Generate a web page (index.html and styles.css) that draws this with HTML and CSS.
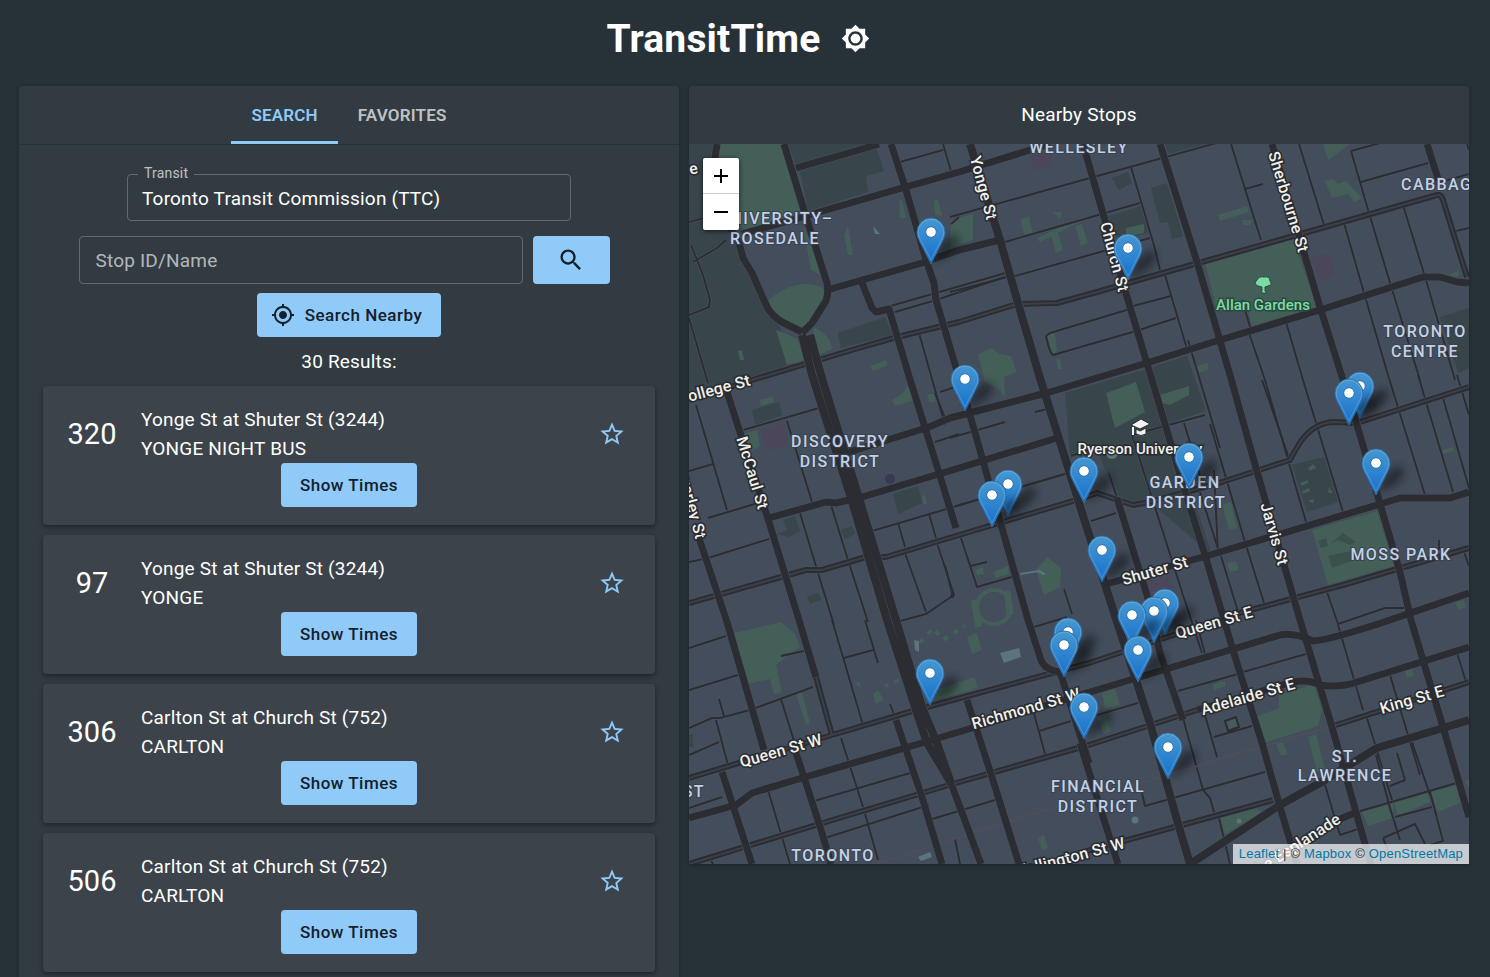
FILE: index.html
```html
<!DOCTYPE html>
<html lang="en">
<head>
<meta charset="utf-8">
<meta name="viewport" content="width=device-width, initial-scale=1">
<title>TransitTime</title>
<link rel="stylesheet" href="styles.css">
</head>
<body>
<div class="app">
  <header class="app-header">
    <h1 class="app-title">TransitTime</h1>
    <button class="icon-button" type="button" aria-label="Toggle light theme">
      <svg class="icon" viewBox="0 0 24 24" aria-hidden="true"><path d="M20 8.69V4h-4.69L12 .69 8.69 4H4v4.69L.69 12 4 15.31V20h4.69L12 23.31 15.31 20H20v-4.69L23.31 12 20 8.69zM12 18c-3.31 0-6-2.69-6-6s2.69-6 6-6 6 2.69 6 6-2.69 6-6 6zm0-10c-2.21 0-4 1.79-4 4s1.79 4 4 4 4-1.79 4-4-1.79-4-4-4z"/></svg>
    </button>
  </header>
  <main class="panels">
    <section class="panel panel-search">
      <div class="tabs" role="tablist">
        <button class="tab tab-active" type="button" role="tab" aria-selected="true">SEARCH</button>
        <button class="tab" type="button" role="tab" aria-selected="false">FAVORITES</button>
      </div>
      <div class="search-body">
        <fieldset class="select-field">
          <legend class="select-legend"><label for="transit">Transit</label></legend>
          <select class="select-input" id="transit"><option>Toronto Transit Commission (TTC)</option></select>
        </fieldset>
        <form class="search-row">
          <input class="text-input" type="text" placeholder="Stop ID/Name" aria-label="Stop ID/Name">
          <button class="button button-search" type="button" aria-label="Search">
            <svg class="icon-small" viewBox="0 0 24 24" aria-hidden="true"><path d="M15.5 14h-.79l-.28-.27C15.41 12.59 16 11.11 16 9.5 16 5.91 13.09 3 9.5 3S3 5.91 3 9.5 5.91 16 9.5 16c1.61 0 3.09-.59 4.23-1.57l.27.28v.79l5 4.99L20.49 19l-4.99-5zm-6 0C7.01 14 5 11.99 5 9.5S7.01 5 9.5 5 14 7.01 14 9.5 11.99 14 9.5 14z"/></svg>
          </button>
        </form>
        <button class="button button-nearby" type="button">
          <svg class="icon-tiny" viewBox="0 0 24 24" aria-hidden="true"><path d="M12 8c-2.21 0-4 1.79-4 4s1.79 4 4 4 4-1.79 4-4-1.79-4-4-4zm8.94 3c-.46-4.17-3.77-7.48-7.94-7.94V1h-2v2.06C6.83 3.52 3.52 6.83 3.06 11H1v2h2.06c.46 4.17 3.77 7.48 7.94 7.94V23h2v-2.06c4.17-.46 7.48-3.77 7.94-7.94H23v-2h-2.06zM12 19c-3.87 0-7-3.13-7-7s3.13-7 7-7 7 3.13 7 7-3.13 7-7 7z"/></svg>
          Search Nearby
        </button>
        <p class="result-count">30 Results:</p>
        <ul class="results">
          <li class="card">
            <div class="card-row"><span class="route">320</span><div class="stop"><p>Yonge St at Shuter St (3244)</p><p>YONGE NIGHT BUS</p></div>
              <button class="star" type="button" aria-label="Add to favorites"><svg class="icon-small" viewBox="0 0 24 24" aria-hidden="true"><path d="M22 9.24l-7.19-.62L12 2 9.19 8.63 2 9.24l5.46 4.73L5.82 21 12 17.27 18.18 21l-1.63-7.03L22 9.24zM12 15.4l-3.76 2.27 1-4.28-3.32-2.88 4.38-.38L12 6.1l1.71 4.04 4.38.38-3.32 2.88 1 4.28L12 15.4z"/></svg></button></div>
            <button class="button" type="button">Show Times</button>
          </li>
          <li class="card">
            <div class="card-row"><span class="route">97</span><div class="stop"><p>Yonge St at Shuter St (3244)</p><p>YONGE</p></div>
              <button class="star" type="button" aria-label="Add to favorites"><svg class="icon-small" viewBox="0 0 24 24" aria-hidden="true"><path d="M22 9.24l-7.19-.62L12 2 9.19 8.63 2 9.24l5.46 4.73L5.82 21 12 17.27 18.18 21l-1.63-7.03L22 9.24zM12 15.4l-3.76 2.27 1-4.28-3.32-2.88 4.38-.38L12 6.1l1.71 4.04 4.38.38-3.32 2.88 1 4.28L12 15.4z"/></svg></button></div>
            <button class="button" type="button">Show Times</button>
          </li>
          <li class="card">
            <div class="card-row"><span class="route">306</span><div class="stop"><p>Carlton St at Church St (752)</p><p>CARLTON</p></div>
              <button class="star" type="button" aria-label="Add to favorites"><svg class="icon-small" viewBox="0 0 24 24" aria-hidden="true"><path d="M22 9.24l-7.19-.62L12 2 9.19 8.63 2 9.24l5.46 4.73L5.82 21 12 17.27 18.18 21l-1.63-7.03L22 9.24zM12 15.4l-3.76 2.27 1-4.28-3.32-2.88 4.38-.38L12 6.1l1.71 4.04 4.38.38-3.32 2.88 1 4.28L12 15.4z"/></svg></button></div>
            <button class="button" type="button">Show Times</button>
          </li>
          <li class="card">
            <div class="card-row"><span class="route">506</span><div class="stop"><p>Carlton St at Church St (752)</p><p>CARLTON</p></div>
              <button class="star" type="button" aria-label="Add to favorites"><svg class="icon-small" viewBox="0 0 24 24" aria-hidden="true"><path d="M22 9.24l-7.19-.62L12 2 9.19 8.63 2 9.24l5.46 4.73L5.82 21 12 17.27 18.18 21l-1.63-7.03L22 9.24zM12 15.4l-3.76 2.27 1-4.28-3.32-2.88 4.38-.38L12 6.1l1.71 4.04 4.38.38-3.32 2.88 1 4.28L12 15.4z"/></svg></button></div>
            <button class="button" type="button">Show Times</button>
          </li>
        </ul>
      </div>
    </section>
    <section class="panel panel-map">
      <h2 class="map-heading">Nearby Stops</h2>
      <div class="map">
        <svg class="map-canvas" viewBox="689 144 780 720" preserveAspectRatio="xMidYMid slice" role="img" aria-label="Map of nearby stops">
          <defs>
            <linearGradient id="pin-fill" x1="0" y1="0" x2="0" y2="1"><stop offset="0" stop-color="#4698d2"/><stop offset="1" stop-color="#1670cb"/></linearGradient>
            <filter id="soft" x="-50%" y="-50%" width="200%" height="200%"><feGaussianBlur stdDeviation="4"/></filter>
            <g id="pin">
              <path d="M1 31L5 19Q15 2 25 3Q33 9 20 21Z" fill="#000" opacity=".42" filter="url(#soft)"/>
              <path d="M0 32L-11.5 9C-13.5 5-14 3-14 .5A14 14.500 0 0 1 14 .5C14 3 13.500 5 11.500 9Z" fill="url(#pin-fill)" stroke="#2e6c9f" stroke-width="1"/>
              <path d="M0 28L-10.500 8C-12.500 4.500-12.800 3-12.800 .5A12.800 13.300 0 0 1 12.800 .5C12.800 3 12.500 4.500 10.500 8Z" fill="none" stroke="#fff" stroke-opacity=".16" stroke-width="1.200"/>
              <circle r="5.300" fill="#fff" stroke="#2b73ad" stroke-width="1"/>
            </g>
            <g id="major">
              <path d="M717 144L713 170L723 215L739 243L743 258L752 273L767 307Q772 316 782 322L802 332M784 144L804 210L827 283Q829 292 826 301L812 323L802 333"/>
              <path d="M796 168L859 150L879 144M742 234L802 217L902 188L959 172L1030 150L1050 144M827 290L922 263L959 250L1000 240"/>
              <path d="M891 144L906 190L926 260L934 283L936 300L970 415L1002 528L1028 620L1041 660Q1045 670 1059 672L1061 675L1089 763"/>
              <path d="M862 283L872 308L876 312L889 309L909 376L931 447L956 528"/>
              <path d="M849 452L929 427L950 418L1050 392L1150 362L1210 343L1320 310L1423 277L1440 277L1457 282L1469 283"/>
              <path d="M769 518L826 502L836 503L862 497L959 468L1057 438"/>
              <path d="M1103 585L1210 555L1377 505L1400 498L1450 498L1469 492"/>
              <path d="M689 818L736 805L752 793L802 778L922 743L972 728L1080 695L1173 667L1280 635Q1293 632 1313 641Q1330 640 1390 620L1469 593"/>
              <path d="M1197 710L1293 682Q1309 679 1320 685Q1340 688 1357 682L1469 647"/>
              <path d="M1083 144L1127 297L1152 380L1183 485L1205 555L1232 647L1262 743L1280 807L1297 864"/>
              <path d="M1160 144L1197 262L1230 375L1258 475L1300 620L1332 727L1363 837L1371 864"/>
              <path d="M1272 144L1320 307L1343 380L1357 425L1400 572L1411 620L1443 727L1469 817"/>
              <path d="M1427 144L1440 185M1117 498L1147 595L1160 653L1183 720"/>
              <path d="M727 392L769 522L799 620L816 677M697 532L727 622L764 750M722 772L752 864M796 753L804 777L822 833L831 864"/>
              <path d="M896 720L922 797L942 864M967 700L992 777L1019 864M1080 743L1100 807L1118 864M951 783L981 864"/>
              <path d="M1340 819L1357 812"/>
            </g>
            <g id="avenue">
              <path d="M802 335L812 375L851 498L887 620L916 710L927 743L951 783M810 335L821 375L859 498L896 620L922 707L937 743L951 783"/>
              <path d="M970 144L1000 240L1018 303L1040 378L1085 522L1117 622L1150 723L1177 820L1190 864"/>
              <path d="M1190 864L1280 805L1320 783L1377 748L1443 728L1469 720"/>
            </g>
            <g id="tram">
              <path d="M689 400L752 380L852 350L897 337L959 322L1017 304L1057 303L1097 292L1163 273L1297 235L1437 195Q1441 194 1443 200L1467 277"/>
              <path d="M689 603L806 570L822 570L866 557L886 557L959 535L1083 498L1097 493L1133 505L1150 502L1222 482L1290 460Q1294 452 1301 441Q1315 422 1335 422L1357 423L1469 387"/>
              <path d="M689 778L832 735L916 710L1089 663L1243 612L1343 585L1469 548"/>
              <path d="M689 864L816 825L949 785L1089 745L1197 710M1330 727L1469 682M1080 853L1273 800M816 677L832 735M1262 743L1276 795"/>
            </g>
            <g id="minor">
              <path d="M689 222L723 213M691 245L703 275L710 300L709 307L689 315M693 262L717 248L726 240M689 318L708 383M900 162L943 150M943 144L951 171M951 224L959 217M887 307L1009 272M936 300L1005 277M919 333L945 425M936 300L895 312"/>
              <path d="M950 217L1090 178L1130 167L1220 142M1005 242L1140 203M1015 276L1150 238M950 292L1015 275M1131 167L1155 249L1160 270M1165 275L1187 349M1133 306L1171 296M1136 331L1176 318M1136 331L1053 355Q1050 354 1046 336L1050 333L1130 309"/>
              <path d="M1231 144L1261 240M1245 189L1263 184M1299 144L1324 225M1467 144L1469 150M1456 231L1469 228M1351 151L1380 143M1351 151L1369 213L1391 286L1420 380M1361 182L1428 163M1403 205L1426 280L1455 380M1344 223L1364 293L1388 375L1425 495M1441 182L1469 174M1242 300L1251 330M1249 333L1265 380L1306 522M1286 322L1303 380L1343 512"/>
              <path d="M1210 424L1245 542L1265 606M1228 485L1245 542M1262 380L1290 461M1418 375L1453 492M1443 398L1469 488M1457 375L1469 415M1221 556L1239 615M1327 592L1338 624L1385 608H1410M1439 540V550M1464 552L1469 566"/>
              <path d="M696 405L727 510M689 471L713 464M743 430L819 408M787 421L812 502M708 518L758 503M708 558L769 539M689 562L708 558M800 513L815 563L834 625M831 505L848 560L868 622M872 531L950 508L1068 473M898 523L905 547M929 514L936 538M905 553L926 612M937 543L954 595L926 614L889 624M935 393L945 418M940 392L958 386M935 442L959 434"/>
              <path d="M950 438L1005 422M1035 412L1048 409M956 506L1068 473M960 535L977 587L1015 576M970 566L987 562M950 596L953 597L945 565M1091 521L1116 513M1071 456L1087 450M1064 589L1072 614M1109 473L1117 498M1132 435L1205 415M1132 435L1183 595L1202 653M1184 423L1203 485M1200 492L1220 555M1214 470L1218 553M1188 340L1220 448"/>
              <path d="M689 648L726 636M689 690L738 675M689 728L712 718L720 718L750 710L813 687M719 699L724 716M716 720L728 765M689 755L719 742M689 808L722 797M781 699L804 773M832 620L863 725M865 620L878 663M844 658L873 650M841 738L864 810L878 860M781 656L804 651M768 790L790 864M814 801L910 773M825 838L929 805M929 820L995 800M890 704L894 714M955 839L960 864M1033 710L1045 754M1039 731L1071 721M1034 627L1067 617M932 743L951 783L930 740M708 856L713 864"/>
              <path d="M1080 720L1138 703M1178 691L1238 674M1243 672L1306 654M1196 620L1205 654M1183 718L1203 790L1210 798L1214 812M1205 715L1217 757M1214 737L1252 726M1225 721L1236 717L1239 727L1228 731ZM1142 793L1145 806L1265 772M1338 625L1363 710M1367 718L1392 800M1390 675L1420 775M1412 742L1430 795M1457 653L1467 685M1397 753L1405 780L1390 786M1376 755L1390 808L1400 840M1430 792L1443 841L1430 845M1395 817L1432 807M1383 838L1415 824L1425 844M1383 838L1388 850M1322 775L1340 835L1358 829M1219 818L1230 864M1357 812L1460 782"/>
            </g>
          </defs>
          <rect x="689" y="144" width="780" height="720" fill="#434d5b"/>
          <g fill="#38454a">
            <path d="M689 144H717L713 170L723 215L740 245L752 275L767 307L778 322L795 366L752 380L689 400ZM788 144H870L796 166ZM800 171L876 148L884 171L866 176L868 192L808 211Z"/>
            <path d="M838 333L885 317L893 335L841 348ZM1065 393L1150 368L1212 555L1150 502L1133 505L1117 500L1098 452L1070 455ZM1152 367L1187 356L1206 411L1165 424ZM1112 178L1128 172L1132 183L1119 190ZM1105 218L1140 206L1149 232L1120 241ZM1151 188L1167 183L1183 236L1172 239L1168 222L1160 223ZM1165 144H1205L1168 154Z"/>
            <path d="M752 410L779 402L782 415L755 425ZM783 520L795 516L800 531L789 537L777 534L787 530ZM841 530L852 526L855 534L845 539ZM893 494L918 486L922 503L898 514ZM807 597L818 593L821 600L810 604ZM1292 465L1324 457L1338 502L1307 512ZM1440 317L1469 308V368L1458 373Z"/>
            <path d="M689 735L693 734V747H689Z"/>
          </g>
          <g fill="#435f58">
            <path d="M720 144H783L802 210L745 230L724 215L714 172ZM768 300Q798 276 823 288Q828 300 811 321Q800 334 778 320ZM776 330Q790 335 798 340L804 360L787 365ZM813 327Q831 335 832 349L815 357ZM803 226L827 280L811 270Z"/>
            <path d="M1204 258L1293 238L1317 307L1252 326L1246 302L1217 312ZM978 354L991 348L1000 354L1011 356L1017 372L1004 377L1005 397L999 389L985 382ZM1106 393L1136 382L1145 412L1115 428Z"/>
            <path d="M1312 530L1377 511L1394 566L1328 585ZM1323 144H1350L1328 160ZM1325 181L1333 179L1338 184L1346 181L1362 198L1354 202L1348 194L1332 198ZM1218 215L1247 206L1249 212L1220 221ZM1242 220H1253L1250 225H1243Z"/>
            <path d="M734 633L781 622L795 634L800 647L785 658L776 665L782 692L774 695L770 679L748 684ZM796 694L802 692L810 723L806 725ZM938 689L974 677L978 688L930 702ZM967 637L977 633L982 650L972 654ZM1036 570L1047 557L1061 568L1060 587L1044 595Z"/>
            <path d="M1256 717L1279 708V695L1314 684L1322 710L1318 726L1264 743ZM1218 818L1254 807L1262 812L1225 834ZM1308 737L1316 734L1325 769L1317 772ZM1276 743H1283L1288 755H1280ZM1362 812L1393 803V818L1368 826ZM1394 803L1427 793L1430 802L1398 816ZM1430 792L1457 785L1465 801L1438 812ZM1226 722L1235 719L1238 729L1228 731Z"/>
            <path d="M951 220L973 214V240L950 247ZM1020 219L1029 216L1033 234L1024 234ZM1051 235L1058 233L1063 250L1056 253ZM1075 226L1082 224L1088 243L1081 246ZM1037 238L1080 218L1082 221L1040 242ZM1053 212L1062 212L1060 219ZM1047 334H1055L1057 353H1051ZM1056 359H1060L1062 369H1058ZM1126 228L1144 224V233L1126 237ZM1196 366L1208 363V370L1196 374ZM1160 395L1189 386V395L1170 405L1162 403Z"/>
            <path d="M934 201L938 199L942 216L935 215ZM844 236L848 226L853 255L848 255ZM899 200L902 200L906 218L900 218ZM870 366L886 360L888 365L873 371ZM738 351L742 350L744 360H740ZM743 434L757 430L760 446L752 451ZM760 400L772 397L774 402L761 406ZM892 400L902 394L909 384L913 401L895 406ZM927 394H934L936 402H929ZM922 496L925 495L927 504L923 504ZM1222 505L1231 502L1237 528L1229 530ZM1227 563L1236 561L1239 570L1230 572ZM1442 450L1453 447L1455 451L1444 454ZM1455 602L1464 600L1466 607L1458 610Z"/>
            <path d="M1102 693L1115 689L1120 705L1105 709ZM1098 718L1106 716L1111 731L1104 734ZM1213 684L1225 681V686L1214 690ZM1405 671L1412 669L1414 676L1407 678ZM873 694L878 690L884 700L876 704ZM855 683L860 682V688ZM1038 838L1044 835L1048 848L1042 850ZM1448 275L1459 271L1458 277ZM1465 781L1469 780V788ZM975 570L983 567L984 574L977 575ZM993 572L1008 566L1009 574L996 578Z"/>
            <path d="M1308 468L1313 464L1316 468L1310 471ZM1300 483L1308 480V483L1301 486ZM1302 491L1309 488L1310 491L1303 494ZM1329 487L1333 493H1328ZM1308 501L1314 499L1313 503Z"/>
          </g>
          <g fill="none" stroke="#435f58" stroke-width="7"><circle cx="994" cy="607" r="17" stroke-width="4"/><path d="M974 600L979 627M1007 591L1010 615" /><path d="M920 643L933 628L943 640L965 626M899 680L885 686" stroke-width="4" stroke-dasharray="5 7"/></g>
          <path d="M1350 545L1338 540L1330 544L1343 533L1356 542ZM1328 556L1352 551L1354 560L1332 568ZM1318 541L1326 538L1328 546L1321 548Z" fill="#3b504c"/>
          <path d="M1029 156L1052 152V166L1034 170ZM761 430L784 424L789 446L767 450ZM1311 257L1329 254L1335 274L1320 281ZM1144 583L1168 577L1178 608L1160 618Z" fill="#4b465a"/>
          <g fill="#5c757d"><path d="M1000 653L1019 648L1021 657L1004 663ZM918 857L930 852L932 857L921 861ZM873 226L880 234H875ZM1020 573L1040 570L1046 574L1043 575L1038 572L1021 575ZM914 640L919 641V652L915 650Z"/><circle cx="1112" cy="453" r="6"/><circle cx="1135" cy="820" r="3.500"/><circle cx="1239" cy="821" r="2.500"/></g>
          <circle cx="890" cy="479" r="5" fill="#373955"/>
          <g fill="none" stroke-linejoin="round">
            <use href="#minor" stroke="#4c5461" stroke-width="3"/><use href="#minor" stroke="#2b2d33" stroke-width="2"/>
            <use href="#tram" stroke="#4c5461" stroke-width="7"/><use href="#tram" stroke="#2b2d33" stroke-width="6"/><use href="#tram" stroke="#3c3f49" stroke-width="2"/>
            <path d="M876 864L972 833L1069 803M1142 783L1260 747L1330 727" stroke="#4d4e59" stroke-width="2"/>
            <use href="#major" stroke="#4c5461" stroke-width="8"/><use href="#avenue" stroke="#4c5461" stroke-width="9"/>
            <use href="#major" stroke="#2b2d33" stroke-width="7"/><use href="#avenue" stroke="#2b2d33" stroke-width="8"/>
          </g>
          <g class="district" text-anchor="middle">
            <text x="1079" y="153">WELLESLEY</text><text x="776" y="224">UNIVERSITY–</text><text x="775" y="244">ROSEDALE</text>
            <text x="1401" y="190" text-anchor="start">CABBAGETOWN</text><text x="1425" y="337">TORONTO</text><text x="1425" y="357">CENTRE</text>
            <text x="840" y="447">DISCOVERY</text><text x="840" y="467">DISTRICT</text><text x="1185" y="488">GARDEN</text><text x="1186" y="508">DISTRICT</text>
            <text x="1401" y="560">MOSS PARK</text><text x="1345" y="762">ST.</text><text x="1345" y="781">LAWRENCE</text>
            <text x="1098" y="792">FINANCIAL</text><text x="1098" y="812">DISTRICT</text><text x="833" y="861">TORONTO</text><text x="705" y="797" text-anchor="end">WEST</text>
          </g>
          <g class="street" text-anchor="middle">
            <text transform="translate(983 188) rotate(75)" y="5">Yonge St</text><text transform="translate(1114 257) rotate(75)" y="5">Church St</text>
            <text transform="translate(1288 202) rotate(73)" y="5">Sherbourne St</text><text transform="translate(752 473) rotate(73)" y="5">McCaul St</text>
            <text transform="translate(690 499) rotate(75)" y="5">Beverley St</text><text transform="translate(1274 534) rotate(74)" y="5">Jarvis St</text>
            <text transform="translate(714 390) rotate(-15)" y="5">College St</text><text transform="translate(693 169) rotate(-12)" y="5" text-anchor="end" dx="5">Grosvenor Ave</text>
            <text transform="translate(1155 571) rotate(-16)" y="5">Shuter St</text><text transform="translate(1214 623) rotate(-16)" y="5">Queen St E</text>
            <text transform="translate(1026 709) rotate(-16)" y="5">Richmond St W</text><text transform="translate(781 751) rotate(-16)" y="5">Queen St W</text>
            <text transform="translate(1248 697) rotate(-16)" y="5">Adelaide St E</text><text transform="translate(1412 700) rotate(-16)" y="5">King St E</text>
            <text transform="translate(1069 858) rotate(-15)" y="5">Wellington St W</text><text transform="translate(1294 847) rotate(-33)" y="5">The Esplanade</text>
          </g>
          <g class="place" text-anchor="middle"><text x="1140" y="454">Ryerson University</text><text class="park-name" x="1263" y="310">Allan Gardens</text></g>
          <g stroke="#2b2d33" stroke-width="1" fill="#f2f2f2"><path d="M1131 425L1141 419L1150 424L1140 429ZM1136 429L1140 431L1146 428V434Q1141 437 1136 434Z"/><path d="M1133 427V435" stroke="#f2f2f2" stroke-width="2"/></g>
          <path d="M1258 286Q1253 284 1257 280Q1259 276 1264 277Q1270 276 1270 281Q1273 285 1268 286L1265 287V291L1267 293H1261L1262 291V287Z" fill="#7bdba3" stroke="#294a40" stroke-width="1"/>
          <g>
            <use href="#pin" x="931" y="232"/><use href="#pin" x="1128" y="248"/><use href="#pin" x="965" y="379"/><use href="#pin" x="1360" y="386"/><use href="#pin" x="1349" y="393"/>
            <use href="#pin" x="1189" y="457"/><use href="#pin" x="1376" y="463"/><use href="#pin" x="1084" y="471"/><use href="#pin" x="1008" y="484"/><use href="#pin" x="992" y="495"/>
            <use href="#pin" x="1102" y="550"/><use href="#pin" x="1165" y="603"/><use href="#pin" x="1154" y="611"/><use href="#pin" x="1132" y="615"/><use href="#pin" x="1068" y="632"/>
            <use href="#pin" x="1064" y="645"/><use href="#pin" x="1138" y="650"/><use href="#pin" x="930" y="673"/><use href="#pin" x="1084" y="707"/><use href="#pin" x="1168" y="747"/>
          </g>
        </svg>
        <div class="zoom-controls">
          <button class="zoom-button" type="button" aria-label="Zoom in"><svg class="zoom-icon" viewBox="0 0 14 14" aria-hidden="true"><path d="M0 7H14M7 0V14"/></svg></button>
          <button class="zoom-button" type="button" aria-label="Zoom out"><svg class="zoom-icon" viewBox="0 0 14 14" aria-hidden="true"><path d="M0 7H14"/></svg></button>
        </div>
        <div class="attribution"><a href="#">Leaflet</a> | © <a href="#">Mapbox</a> © <a href="#">OpenStreetMap</a></div>
      </div>
    </section>
  </main>
</div>
</body>
</html>
```
FILE: styles.css
```css
* { box-sizing: border-box; }
body { margin: 0; background: #273238; color: #fff; font-family: Roboto, sans-serif; font-size: 19px; line-height: 29px; letter-spacing: .01em; }
button, input, select { font-family: inherit; letter-spacing: inherit; border: 0; }
button { cursor: pointer; padding: 0; }
p, h1, h2 { margin: 0; }
.app { min-height: 100vh; display: flex; flex-direction: column; }
.app-header { display: flex; justify-content: center; align-items: center; gap: 6px; padding: 10px 0 19px; }
.app-title { font-size: 39px; line-height: 46px; font-weight: 700; }
.icon-button { display: flex; padding: 14px; background: none; color: #fff; }
.icon, .icon-small, .icon-tiny { fill: currentColor; display: block; }
.icon { width: 29px; height: 29px; }
.icon-small { width: 28px; height: 28px; }
.icon-tiny { width: 24px; height: 24px; }
.panels { flex: 1; display: grid; grid-template-columns: 11fr 13fr; gap: 10px; padding: 0 21px 0 19px; }
.panel { background: #323b41; border-radius: 4px 4px 0 0; box-shadow: 0 1px 4px rgba(0, 0, 0, .3); min-width: 0; }
.panel-map { align-self: start; }
.tabs { display: flex; justify-content: center; height: 59px; border-bottom: 1px solid #263238; }
.tab { padding: 0 20px; background: none; color: rgba(255, 255, 255, .7); font-size: 17px; font-weight: 600; border-top: 3px solid transparent; border-bottom: 3px solid transparent; }
.tab-active { color: #90caf9; border-bottom-color: #90caf9; }
.search-body { display: flex; flex-direction: column; align-items: center; padding: 19px 24px 4px; }
.select-field { width: 444px; max-width: 100%; height: 57px; margin: 0; padding: 0; border: 1px solid #626a6f; border-radius: 4px; }
.select-legend { margin-left: 10px; padding: 0 6px 2px; font-size: 14px; line-height: 18px; color: rgba(255, 255, 255, .7); }
.select-input { display: block; width: 100%; height: 29px; padding: 0 14px; appearance: none; background: transparent; color: #fff; font-size: 19px; }
.search-row { display: flex; gap: 10px; margin: 15px 0 9px; padding-right: 10px; }
.text-input { width: 444px; min-width: 0; height: 48px; padding: 0 16px; border: 1px solid #626a6f; border-radius: 4px; background: transparent; color: #fff; font-size: 19px; }
.text-input::placeholder { color: rgba(255, 255, 255, .65); opacity: 1; }
.button { display: flex; align-items: center; justify-content: center; height: 44px; padding: 0 19px; border-radius: 4px; background: #90caf9; color: #14202b; font-size: 17px; font-weight: 500; letter-spacing: .5px; }
.button-search { width: 77px; height: 48px; }
.button-nearby { gap: 10px; padding: 0 19px 0 14px; }
.result-count { margin: 10px 0; }
.results { width: 100%; margin: 0; padding: 0; list-style: none; display: flex; flex-direction: column; gap: 10px; }
.card { display: flex; flex-direction: column; align-items: center; padding: 19px 19px 18px; border-radius: 4px; background: #3c434a; box-shadow: 0 2px 5px rgba(0, 0, 0, .4); }
.card-row { display: flex; align-items: center; width: 100%; }
.route { width: 60px; margin-right: 19px; text-align: center; font-size: 29px; letter-spacing: 0; }
.stop { flex: 1; }
.star { padding: 10px; background: none; color: #90caf9; }
.map-heading { padding: 14px 0 15px; text-align: center; font-size: 19px; font-weight: 400; }
.map { position: relative; aspect-ratio: 13 / 12; overflow: hidden; background: #434d5b; }
.map-canvas { display: block; width: 100%; height: 100%; }
.district { fill: #c3d0e6; stroke: #39434f; stroke-width: 2px; paint-order: stroke; font-size: 16px; font-weight: 500; letter-spacing: .09em; }
.street, .place { fill: #f1f0ec; stroke: #282b30; stroke-width: 3px; paint-order: stroke; font-size: 16px; font-weight: 500; }
.place { font-size: 15px; letter-spacing: 0; }
.park-name { fill: #7bdba3; stroke: #294a40; }
.zoom-controls { position: absolute; top: 14px; left: 14px; border-radius: 2px; overflow: hidden; box-shadow: 0 1px 5px rgba(0, 0, 0, .65); }
.zoom-button { display: flex; align-items: center; justify-content: center; width: 36px; height: 36px; background: #fff; }
.zoom-button:first-child { border-bottom: 1px solid #ccc; }
.zoom-icon { width: 14px; height: 14px; stroke: #000; stroke-width: 2; }
.attribution { position: absolute; right: 0; bottom: 0; padding: 0 6px; background: rgba(255, 255, 255, .7); color: #333; font-family: "Liberation Sans", Arial, sans-serif; font-size: 13px; line-height: 20px; }
.attribution a { color: #0078a8; text-decoration: none; }
```
